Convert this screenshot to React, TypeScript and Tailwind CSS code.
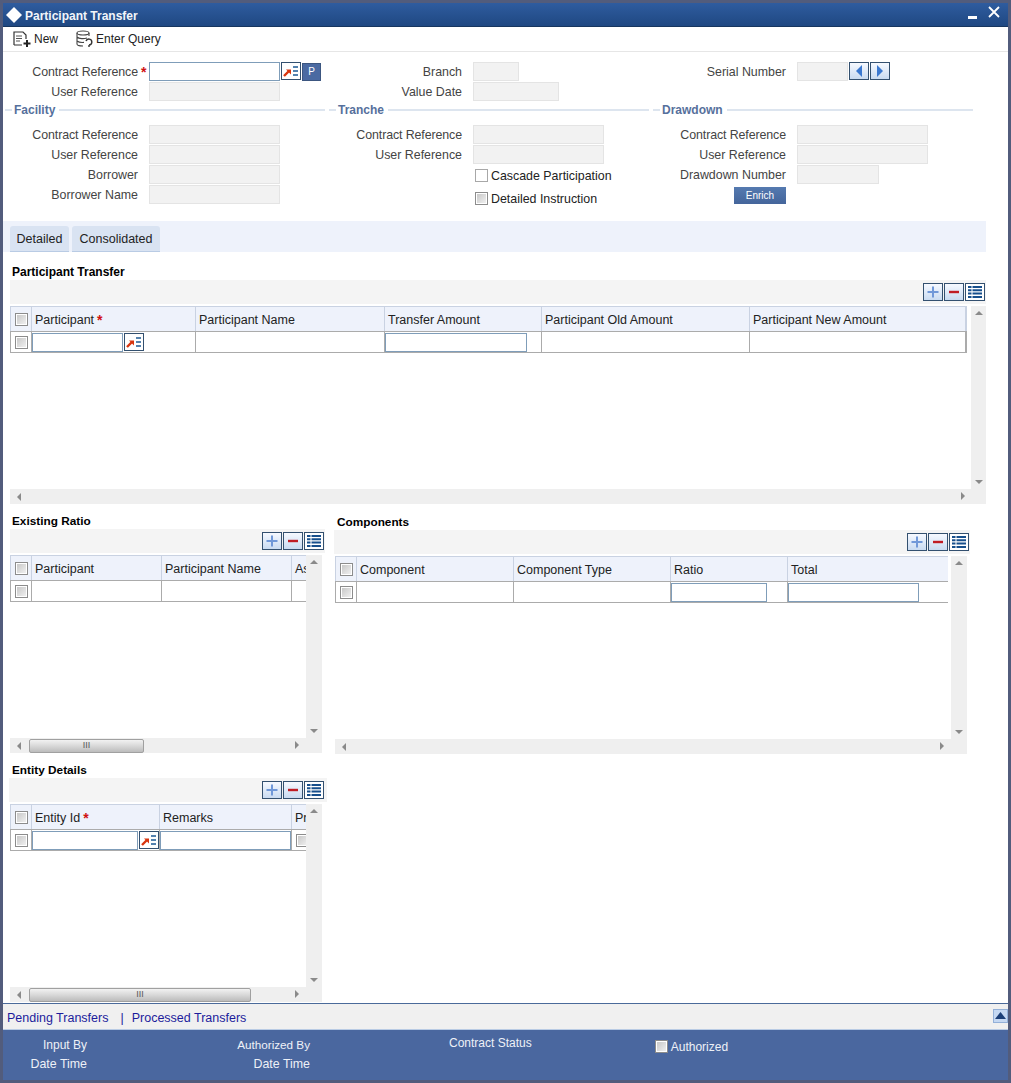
import React from "react";

function Req() {
  return <span className="text-[#d01010] font-bold ml-[3px] text-[14px] leading-none">*</span>;
}

function Check({ plain }: { plain?: boolean }) {
  return (
    <span
      className={
        plain
          ? "block shrink-0 w-[13px] h-[13px] border border-[#a8a8a8] bg-white"
          : "block shrink-0 w-[13px] h-[13px] border border-[#8c8c8c] bg-gradient-to-br from-[#c4c4c4] to-[#f4f4f4] shadow-[inset_0_0_0_1px_#ffffff]"
      }
    />
  );
}

function TextBox({ className }: { className: string }) {
  return <span className={"block shrink-0 h-[19px] bg-white border border-[#7f9db9] " + className} />;
}

function ReadBox({ className }: { className: string }) {
  return <span className={"block shrink-0 h-[19px] bg-[#f2f2f2] border border-[#e4e4e4] " + className} />;
}

function IconBtn({ children, className = "" }: { children: React.ReactNode; className?: string }) {
  return (
    <span
      className={
        "flex shrink-0 items-center justify-center w-[20px] h-[18px] border border-[#33506f] bg-gradient-to-b from-[#f6f9ff] to-[#c9dbf1] " +
        className
      }
    >
      {children}
    </span>
  );
}

function Lookup() {
  return (
    <IconBtn className="bg-none bg-white">
      <svg width="18" height="14" viewBox="0 0 18 14">
        <path d="M2 12 L7 7" stroke="#d8350f" strokeWidth="2.4" />
        <path d="M4 5.5 H9 V10.5 Z" fill="#d8350f" />
        <path d="M11 3 H16 M11 7 H16 M11 11 H16" stroke="#1d5a94" strokeWidth="1.7" />
      </svg>
    </IconBtn>
  );
}

function Row({ label, req, tight, children }: { label: string; req?: boolean; tight?: boolean; children: React.ReactNode }) {
  return (
    <div className="flex h-[20px] items-center">
      <div className={"w-[135px] shrink-0 text-right relative text-[12.4px] " + (tight ? "tracking-[-0.1px]" : "")}>
        {label}
        {req && <span className="absolute left-[138px] top-0 text-[#d01010] font-bold text-[14px]">*</span>}
      </div>
      <div className="ml-[11px] self-start flex items-start gap-[1px]">{children}</div>
    </div>
  );
}

function Legend({ title }: { title: string }) {
  return (
    <div className="flex h-[16px] items-center mb-[7px] mr-[2px]">
      <span className="ml-[2px] w-[7px] h-[2px] bg-[#dde5ef]" />
      <span className="ml-[2px] mr-[4px] font-bold text-[#56709c]">{title}</span>
      <span className="h-[2px] bg-[#dde5ef] flex-1" />
    </div>
  );
}

function BandButtons({ className = "" }: { className?: string }) {
  return (
    <div className={"flex justify-end gap-[1px] pt-[3px] h-[24px] bg-[#f4f4f4] " + className}>
      <IconBtn>
        <svg width="14" height="14" viewBox="0 0 14 14">
          <path d="M7 1.5 V12.5 M1.5 7 H12.5" stroke="#7098d8" strokeWidth="2" />
        </svg>
      </IconBtn>
      <IconBtn>
        <svg width="14" height="14" viewBox="0 0 14 14">
          <path d="M2 7 H12" stroke="#c01c24" strokeWidth="2.4" />
        </svg>
      </IconBtn>
      <IconBtn className="bg-none bg-white">
        <svg width="16" height="14" viewBox="0 0 16 14">
          <path d="M1 2 H15 M1 5.3 H15 M1 8.6 H15 M1 12 H15" stroke="#174f8c" strokeWidth="2" />
          <path d="M5 1 V13" stroke="#ffffff" strokeWidth="1" />
        </svg>
      </IconBtn>
    </div>
  );
}

function Tri({ dir }: { dir: "up" | "down" | "left" | "right" }) {
  const d = {
    up: "M0 5 L4 1 L8 5 Z",
    down: "M0 1 L8 1 L4 5 Z",
    left: "M5 0 L5 8 L1 4 Z",
    right: "M1 0 L1 8 L5 4 Z",
  }[dir];
  const vertical = dir === "up" || dir === "down";
  return (
    <svg width={vertical ? 8 : 6} height={vertical ? 6 : 8} viewBox={vertical ? "0 0 8 6" : "0 0 6 8"}>
      <path d={d} fill="#8a8a8a" />
    </svg>
  );
}

type Col = {
  label: string;
  req?: boolean;
  w: string;
  cell?: React.ReactNode;
};

function Panel({
  title,
  titleClass = "text-[11.8px]",
  cols,
  bandClass,
  bandPad,
  tableClass,
  vClass,
  thumbClass,
  rightArrowClass,
  className = "",
}: {
  title: string;
  titleClass?: string;
  cols: Col[];
  bandClass: string;
  bandPad: string;
  tableClass: string;
  vClass: string;
  thumbClass?: string;
  rightArrowClass: string;
  className?: string;
}) {
  return (
    <div className={className}>
      <div className={"h-[16px] font-bold text-black pl-[2px] leading-[16px] " + titleClass}>{title}</div>
      <div className={bandClass}>
        <BandButtons className={bandPad} />
      </div>
      <div className="flex mt-[2px] h-[183px] items-stretch">
        <div className={"overflow-hidden " + tableClass}>
          <div className="flex h-[25px] bg-[#eef2fb] border border-b-0 border-[#c9d2e2] w-max min-w-full text-[12.5px]">
            <div className="w-[21px] shrink-0 flex items-center justify-center border-r border-[#c9d2e2]">
              <Check />
            </div>
            {cols.map((c) => (
              <div
                key={c.label}
                className={"shrink-0 flex items-center pl-[3px] pt-[2px] whitespace-nowrap text-[#222] border-r border-[#c9d2e2] " + c.w}
              >
                {c.label}
                {c.req && <Req />}
              </div>
            ))}
          </div>
          <div className="flex h-[22px] border border-[#ababab] w-max min-w-full">
            <div className="w-[21px] shrink-0 flex items-center justify-center border-r border-[#ababab]">
              <Check />
            </div>
            {cols.map((c) => (
              <div key={c.label} className={"shrink-0 flex items-center gap-[1px] overflow-hidden border-r border-[#ababab] " + c.w}>
                {c.cell}
              </div>
            ))}
          </div>
        </div>
        <div className={"flex flex-col items-center justify-between py-[4px] bg-[#efefef] " + vClass}>
          <Tri dir="up" />
          <Tri dir="down" />
        </div>
      </div>
      <div className="flex h-[15px] items-center bg-[#efefef] pl-[6px] relative">
        <Tri dir="left" />
        {thumbClass && (
          <div className={"ml-[7px] h-[14px] flex items-center justify-center rounded-[2px] border border-[#a0a0a0] bg-gradient-to-b from-[#f2f2f2] via-[#d8d8d8] to-[#bcbcbc] text-[9px] leading-none text-[#555] " + thumbClass}>
            III
          </div>
        )}
        <div className={"absolute top-[3px] " + rightArrowClass}>
          <Tri dir="right" />
        </div>
      </div>
    </div>
  );
}

export default function App() {
  return (
    <div className="w-[1011px] h-[1083px] overflow-hidden flex flex-col bg-[#525c7c] px-[3px] pt-[3px] pb-[3px] text-[12px] leading-[14px] text-[#444] font-['Liberation_Sans',Arial,sans-serif]">
      {/* title bar */}
      <div className="h-[24px] shrink-0 flex items-center bg-gradient-to-b from-[#2f5c9f] to-[#1f4882] border-b border-[#17365f]">
        <svg width="16" height="16" viewBox="0 0 16 16" className="ml-[3px]">
          <path d="M8 0 L16 8 L8 16 L0 8 Z" fill="#ffffff" />
        </svg>
        <span className="ml-[3px] pt-[2px] font-bold text-[#f2f5fa]">Participant Transfer</span>
        <span className="ml-auto mr-[11px] mt-[6px] w-[9px] h-[3px] bg-white" />
        <svg width="12" height="12" viewBox="0 0 12 12" className="mr-[8px] mb-[5px]">
          <path d="M1 1 L11 11 M11 1 L1 11" stroke="#ffffff" strokeWidth="1.8" />
        </svg>
      </div>

      {/* toolbar */}
      <div className="h-[25px] shrink-0 flex items-center bg-white border-b border-[#e6e6e6] text-[#222]">
        <svg width="20" height="18" viewBox="0 0 20 18" className="ml-[10px]">
          <path d="M1 15 V2 H10 L13 5 V9 M1 15 H9" fill="none" stroke="#333" strokeWidth="1.2" />
          <path d="M3 6 H9 M3 8.5 H9 M3 11 H7" stroke="#555" strokeWidth="1" />
          <path d="M14 10 V17 M10.5 13.5 H17.5" stroke="#222" strokeWidth="2" />
        </svg>
        <span className="ml-[1px]">New</span>
        <svg width="20" height="18" viewBox="0 0 20 18" className="ml-[17px]">
          <ellipse cx="8" cy="3" rx="6" ry="2" fill="none" stroke="#444" strokeWidth="1.1" />
          <path d="M2 3 V14 C2 15.5 5 16 8 16 M14 3 V6 M2 7 C4 9 9 9 12 8 M2 11 C4 12.6 7 12.6 9 12.4" fill="none" stroke="#444" strokeWidth="1.1" />
          <path d="M11 11 A3 3 0 1 1 14 15 M14 15 V17" fill="none" stroke="#333" strokeWidth="1.4" />
        </svg>
        <span className="ml-[1px]">Enter Query</span>
      </div>

      {/* body */}
      <div className="flex-1 min-h-0 bg-white pt-[10px] overflow-hidden">
        <div className="flex">
          <div className="w-[324px] shrink-0">
            <Row label="Contract Reference" req tight>
              <TextBox className="w-[131px]" />
              <Lookup />
              <span className="flex items-center justify-center w-[19px] h-[18px] mt-[1px] bg-[#4a6aa2] border border-[#3c5680] text-[10px] text-white">P</span>
            </Row>
            <Row label="User Reference">
              <ReadBox className="w-[131px]" />
            </Row>
            <Legend title="Facility" />
            <Row label="Contract Reference" tight>
              <ReadBox className="w-[131px]" />
            </Row>
            <Row label="User Reference">
              <ReadBox className="w-[131px]" />
            </Row>
            <Row label="Borrower">
              <ReadBox className="w-[131px]" />
            </Row>
            <Row label="Borrower Name">
              <ReadBox className="w-[131px]" />
            </Row>
          </div>
          <div className="w-[324px] shrink-0">
            <Row label="Branch">
              <ReadBox className="w-[46px]" />
            </Row>
            <Row label="Value Date">
              <ReadBox className="w-[86px]" />
            </Row>
            <Legend title="Tranche" />
            <Row label="Contract Reference" tight>
              <ReadBox className="w-[131px]" />
            </Row>
            <Row label="User Reference">
              <ReadBox className="w-[131px]" />
            </Row>
            <div className="flex items-center h-[21px] pl-[148px] gap-[3px] text-[#222]">
              <Check plain />
              <span className="text-[12.4px]">Cascade Participation</span>
            </div>
            <div className="flex items-center h-[25px] pl-[148px] gap-[3px] text-[#222]">
              <Check />
              <span className="text-[12.4px]">Detailed Instruction</span>
            </div>
          </div>
          <div className="w-[324px] shrink-0">
            <Row label="Serial Number">
              <ReadBox className="w-[51px]" />
              <IconBtn>
                <svg width="10" height="14" viewBox="0 0 10 14">
                  <path d="M8 1 V13 L2 7 Z" fill="#3a78d0" />
                </svg>
              </IconBtn>
              <IconBtn>
                <svg width="10" height="14" viewBox="0 0 10 14">
                  <path d="M2 1 V13 L8 7 Z" fill="#3a78d0" />
                </svg>
              </IconBtn>
            </Row>
            <div className="h-[20px]" />
            <Legend title="Drawdown" />
            <Row label="Contract Reference" tight>
              <ReadBox className="w-[131px]" />
            </Row>
            <Row label="User Reference">
              <ReadBox className="w-[131px]" />
            </Row>
            <Row label="Drawdown Number">
              <ReadBox className="w-[82px]" />
            </Row>
            <div className="w-[135px] flex justify-end mt-[2px]">
              <span className="flex items-center justify-center w-[52px] h-[17px] bg-gradient-to-b from-[#557ab0] to-[#44659b] text-[10px] text-white">Enrich</span>
            </div>
          </div>
        </div>

        {/* tabs */}
        <div className="mt-[10px] h-[31px] w-[983px] bg-[#eef2fb] flex items-end gap-[3px] pl-[7px] text-[12.5px]">
          <div className="w-[59px] h-[26px] flex items-center justify-center rounded-t-[3px] bg-[#d9e3f2] border-b border-[#b9cbe4] text-[#222]">Detailed</div>
          <div className="w-[88px] h-[26px] flex items-center justify-center rounded-t-[3px] bg-[#d9e3f2] border-b border-[#b9cbe4] text-[#222]">Consolidated</div>
        </div>

        <div className="pl-[7px]">
          <Panel
            title="Participant Transfer"
            titleClass="text-[12px]"
            className="mt-[12px] w-[976px] relative"
            bandClass="w-[976px]"
            bandPad="pr-[1px]"
            tableClass="w-[957px] mr-[4px]"
            vClass="w-[15px]"
            rightArrowClass="left-[950px]"
            cols={[
              { label: "Participant", req: true, w: "w-[164px]", cell: (<><TextBox className="w-[91px]" /><Lookup /></>) },
              { label: "Participant Name", w: "w-[189px]" },
              { label: "Transfer Amount", w: "w-[157px]", cell: <TextBox className="w-[142px]" /> },
              { label: "Participant Old Amount", w: "w-[208px]" },
              { label: "Participant New Amount", w: "w-[216px]" },
            ]}
          />

          <div className="flex">
            <div className="w-[324px] shrink-0">
              <Panel
                title="Existing Ratio"
                className="mt-[9px] w-[312px] relative"
                bandClass="w-[315px]"
                bandPad="pr-[1px]"
                tableClass="w-[296px]"
                vClass="w-[16px]"
                thumbClass="w-[115px]"
                rightArrowClass="left-[284px]"
                cols={[
                  { label: "Participant", w: "w-[130px]" },
                  { label: "Participant Name", w: "w-[130px]" },
                  { label: "As", w: "w-[60px]" },
                ]}
              />
              <Panel
                title="Entity Details"
                className="mt-[9px] w-[312px] relative"
                bandClass="w-[318px] -ml-[1px]"
                bandPad="pr-[3px]"
                tableClass="w-[296px]"
                vClass="w-[16px]"
                thumbClass="w-[222px]"
                rightArrowClass="left-[284px]"
                cols={[
                  { label: "Entity Id", req: true, w: "w-[128px]", cell: (<><TextBox className="w-[106px]" /><Lookup /></>) },
                  { label: "Remarks", w: "w-[132px]", cell: <TextBox className="w-[131px]" /> },
                  { label: "Pr", w: "w-[60px]", cell: <span className="ml-[4px]"><Check /></span> },
                ]}
              />
            </div>
            <Panel
              title="Components"
              className="mt-[10px] w-[632px] relative ml-[1px]"
              bandClass="w-[636px] -ml-[1px]"
              bandPad="pr-[1px]"
              tableClass="w-[613px] mr-[3px]"
              vClass="w-[16px]"
              rightArrowClass="left-[604px]"
              cols={[
                { label: "Component", w: "w-[157px]" },
                { label: "Component Type", w: "w-[157px]" },
                { label: "Ratio", w: "w-[117px]", cell: <TextBox className="w-[96px]" /> },
                { label: "Total", w: "w-[161px]", cell: <TextBox className="w-[131px]" /> },
              ]}
            />
          </div>
        </div>
      </div>

      {/* footer links */}
      <div className="h-[27px] shrink-0 flex items-center bg-[#f0f0f0] border-t border-[#4a6a9a] border-b border-b-[#b9cbe4] pl-[4px] text-[#1c1c9c] text-[12.5px]">
        <span className="pt-[2px]">Pending Transfers</span>
        <span className="ml-[12px] pt-[2px]">|</span>
        <span className="ml-[8px] pt-[2px]">Processed Transfers</span>
        <span className="ml-auto mb-[2px] flex items-center justify-center w-[15px] h-[14px] bg-[#c5d8f2] border border-[#93b0d8]">
          <svg width="11" height="7" viewBox="0 0 11 7">
            <path d="M0 7 L5.5 0 L11 7 Z" fill="#1c3f78" />
          </svg>
        </span>
      </div>

      {/* audit bar */}
      <div className="h-[50px] shrink-0 flex bg-[#4a679f] text-[#eef1f7]">
        <div className="w-[84px] pt-[8px] text-right">
          <div className="h-[19px]">Input By</div>
          <div className="text-[12.4px]">Date Time</div>
        </div>
        <div className="w-[223px] pt-[8px] text-right">
          <div className="h-[19px] text-[11.7px]">Authorized By</div>
          <div className="text-[12.4px]">Date Time</div>
        </div>
        <div className="ml-[139px] pt-[6px]">Contract Status</div>
        <div className="ml-[123px] pt-[10px] flex gap-[3px] h-max">
          <Check />
          <span>Authorized</span>
        </div>
      </div>
    </div>
  );
}
